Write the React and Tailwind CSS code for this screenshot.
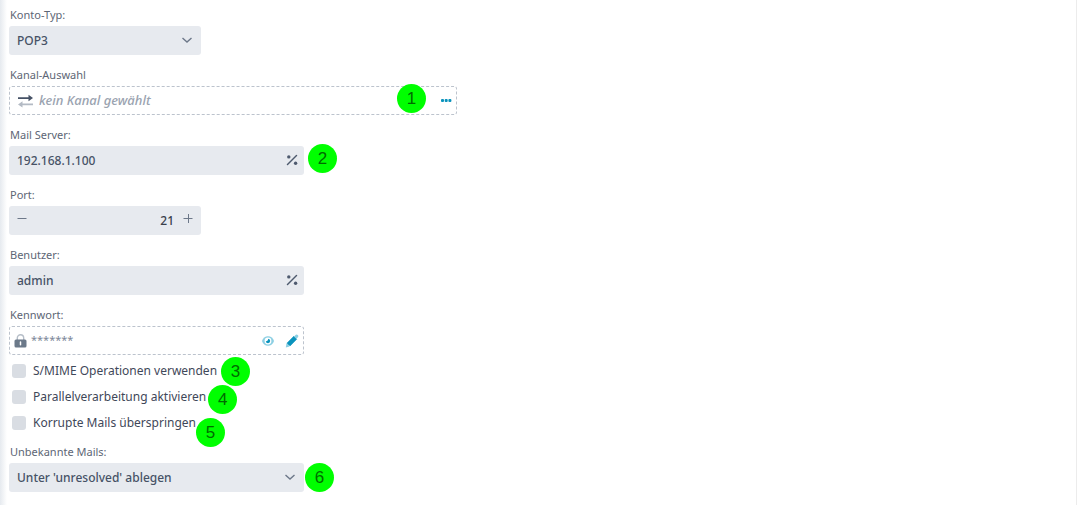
import { useState } from 'react';
import clsx from 'clsx';

const fieldBox = 'h-[29px] w-full rounded-[3px] bg-[#e7eaef] text-xs font-medium text-[#465266] outline-none';
const dashedBox = 'flex h-[29px] items-center rounded-[3px] border border-dashed border-[#bcc3cd]';

const Marker = ({ number, className }) => (
  <span
    className={clsx(
      'absolute z-10 flex size-[29px] items-center justify-center rounded-full bg-[#00ff00] font-["Liberation_Sans",sans-serif] text-[17px] text-[#006b00]',
      className
    )}
  >
    {number}
  </span>
);

const Field = ({ id, label, width, children }) => (
  <div className={clsx('flex max-w-full flex-col gap-[3px]', width)}>
    <label htmlFor={id} className="h-4 px-px text-[11px] leading-4 text-[#5d6675]">
      {label}
    </label>
    <div className="relative">{children}</div>
  </div>
);

const ChevronIcon = () => (
  <svg viewBox="0 0 12 12" className="pointer-events-none absolute top-2 right-2 size-3" fill="none" stroke="#6d7889" strokeWidth="1.4">
    <path d="M1.500 4 6 8l4.500-4" />
  </svg>
);

const SelectField = ({ id, label, width, options, children }) => (
  <Field id={id} label={label} width={width}>
    <select id={id} className={clsx(fieldBox, 'appearance-none px-2')}>
      {options.map((option) => (
        <option key={option}>{option}</option>
      ))}
    </select>
    <ChevronIcon />
    {children}
  </Field>
);

const VariableField = ({ id, label, value, children }) => (
  <Field id={id} label={label} width="w-[295px]">
    <input id={id} type="text" defaultValue={value} className={clsx(fieldBox, 'pr-8 pl-2')} />
    <button type="button" aria-label="Variable einfügen" className="absolute top-[7px] right-[5px] size-3.5">
      <svg viewBox="0 0 14 14" fill="#4e5a6e">
        <path d="M2.500 11.500 11.500 2.500" stroke="#4e5a6e" strokeWidth="1.500" strokeLinecap="round" />
        <circle cx="3.800" cy="3.900" r="1.700" />
        <circle cx="10.600" cy="10.300" r="1.700" />
      </svg>
    </button>
    {children}
  </Field>
);

const CheckRow = ({ label, marker, markerClass }) => (
  <div className="flex h-[26px] items-center">
    <label className="relative flex items-center gap-[7px] text-xs leading-5 text-[#3f4859]">
      <input type="checkbox" className="size-3.5 appearance-none rounded-[3px] bg-[#d9dde3] checked:bg-[#0a93bd]" />
      {label}
      <Marker number={marker} className={markerClass} />
    </label>
  </div>
);

const PortField = () => {
  const [port, setPort] = useState(21);

  return (
    <Field id="port" label="Port:" width="w-[192px]">
      <div className={clsx(fieldBox, 'flex items-center px-[7px]')}>
        <button type="button" aria-label="Verringern" onClick={() => setPort(port - 1)} className="mb-1.5 size-3">
          <svg viewBox="0 0 12 12" stroke="#6d7889" fill="none">
            <path d="M1.500 6.500h9" />
          </svg>
        </button>
        <input
          id="port"
          type="text"
          inputMode="numeric"
          value={port}
          onChange={(e) => setPort(Number(e.target.value) || 0)}
          className="min-w-0 flex-1 bg-transparent pr-2 text-right text-[#3a3f4b] outline-none"
        />
        <button type="button" aria-label="Erhöhen" onClick={() => setPort(port + 1)} className="mb-1.5 size-3">
          <svg viewBox="0 0 12 12" stroke="#6d7889" fill="none">
            <path d="M1.500 6.500h9M6.500 2v9" />
          </svg>
        </button>
      </div>
    </Field>
  );
};

export default function App() {
  return (
    <div className="min-h-screen border-r border-[#ececec] bg-white bg-[linear-gradient(to_right,#e6eaef,#ffffff_7px)] font-['Noto_Sans',sans-serif]">
      <form className="flex flex-col gap-3 px-[9px] pt-[7px]">
        <SelectField id="account-type" label="Konto-Typ:" width="w-[192px]" options={['POP3', 'IMAP', 'Exchange']} />

        <Field id="channel" label="Kanal-Auswahl" width="w-[448px]">
          <div className={clsx(dashedBox, 'pr-1 pl-2')}>
            <svg viewBox="0 0 15 14" className="h-3.5 w-[15px] shrink-0">
              <path d="M0 3.200h10.500V.8L15 4l-4.500 3.200V5H0z" fill="#465266" />
              <path d="M15 9.500H4.500V7.200L0 10.400l4.500 3.200v-2.400H15z" fill="#b3bac4" />
            </svg>
            <input
              id="channel"
              type="text"
              readOnly
              placeholder="kein Kanal gewählt"
              className="min-w-0 flex-1 pl-1.5 text-[13px] font-medium italic outline-none placeholder:text-[#9aa3b0]"
            />
            <button type="button" aria-label="Kanal auswählen" className="size-3">
              <svg viewBox="0 0 12 12" fill="#0a93bd">
                <rect x="1" y="4" width="3" height="3" rx="1" />
                <rect x="4.700" y="4" width="3" height="3" rx="1" />
                <rect x="8.400" y="4" width="3" height="3" rx="1" />
              </svg>
            </button>
          </div>
          <Marker number={1} className="-top-0.5 right-[31px]" />
        </Field>

        <VariableField id="server" label="Mail Server:" value="192.168.1.100">
          <Marker number={2} className="-top-0.5 left-full ml-1" />
        </VariableField>

        <PortField />

        <VariableField id="user" label="Benutzer:" value="admin" />

        <div>
          <Field id="password" label="Kennwort:" width="w-[295px]">
            <div className={clsx(dashedBox, 'gap-1 px-1')}>
              <svg viewBox="0 0 13 14" className="h-3.5 w-[13px] shrink-0">
                <path d="M3.300 6V4a3.200 3.200 0 0 1 6.400 0v2" fill="none" stroke="#b6bec8" strokeWidth="1.400" />
                <rect x=".5" y="5.500" width="12" height="8" rx="1.500" fill="#6b7989" />
                <path d="M6.500 8v2.800" stroke="#fff" strokeWidth="1.500" strokeLinecap="round" />
              </svg>
              <input
                id="password"
                type="text"
                readOnly
                value="*******"
                className="min-w-0 flex-1 text-[11px] text-[#7c8798] outline-none"
              />
              <button type="button" aria-label="Kennwort anzeigen" className="mr-1.5 h-3 w-3.5">
                <svg viewBox="0 0 14 12">
                  <path d="M1 6c.8-3 3.200-4.800 6-4.800S12.200 3 13 6c-.8 3-3.200 4.800-6 4.800S1.800 9 1 6z" fill="#8ccfe3" />
                  <circle cx="7" cy="6" r="3.400" fill="#fff" />
                  <path d="M7.200 3.800a2.200 2.200 0 1 1-2.400 2.400c1.400.2 2.400-.8 2.400-2.400z" fill="#0a93bd" />
                </svg>
              </button>
              <button type="button" aria-label="Kennwort bearbeiten" className="size-3.5">
                <svg viewBox="0 0 14 14">
                  <path d="M9.300 2.200 10.800.7q1-.6 2 .3t.3 2L11.600 4.600z" fill="#8ccfe3" />
                  <path d="M1.500 9.300 4.700 12.500.8 13.400z" fill="#8ccfe3" />
                  <path d="M8.800 2.300 11.700 5.200 5 12Q4.500 10.800 3.300 10.800 3.200 9.600 1.900 9.200z" fill="#0a93bd" stroke="#0a93bd" strokeWidth=".6" />
                </svg>
              </button>
            </div>
          </Field>

          <div className="px-[3px] pt-[3px]">
            <CheckRow label="S/MIME Operationen verwenden" marker={3} markerClass="-top-1 left-full ml-1" />
            <CheckRow label="Parallelverarbeitung aktivieren" marker={4} markerClass="-top-0.5 left-full ml-0.5" />
            <CheckRow label="Korrupte Mails überspringen" marker={5} markerClass="top-[5px] left-full" />
          </div>
        </div>

        <div className="-mt-1">
          <SelectField
            id="unknown-mails"
            label="Unbekannte Mails:"
            width="w-[295px]"
            options={["Unter 'unresolved' ablegen", 'Löschen', 'Ignorieren']}
          >
            <Marker number={6} className="top-0 left-full ml-px" />
          </SelectField>
        </div>
      </form>
    </div>
  );
}
